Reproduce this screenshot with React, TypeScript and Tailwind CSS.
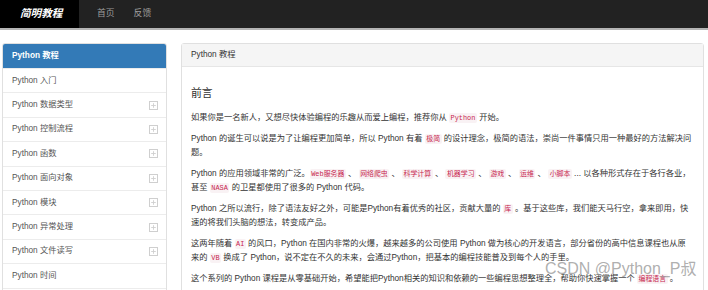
import React from "react";

const F = { fontFamily: '"Liberation Sans", "Noto Sans CJK SC", sans-serif' };

function C({ children }: { children: React.ReactNode }) {
  return (
    <code
      className="rounded-[2px] bg-[#f9f2f4] px-[1.5px] py-[1px] text-[6.9px] text-[#c7254e]"
      style={{ fontFamily: '"Liberation Mono", "Noto Sans CJK SC", monospace' }}
    >
      {children}
    </code>
  );
}

function Plus() {
  return (
    <svg width="9" height="9" viewBox="0 0 9 9" className="shrink-0">
      <rect x="0.5" y="0.5" width="8" height="8" fill="none" stroke="#cfcfcf" />
      <path d="M4.5 2.2v4.6M2.2 4.5h4.6" stroke="#cfcfcf" strokeWidth="0.9" />
    </svg>
  );
}

const items: [string, boolean][] = [
  ["Python 入门", false],
  ["Python 数据类型", true],
  ["Python 控制流程", true],
  ["Python 函数", true],
  ["Python 面向对象", true],
  ["Python 模块", true],
  ["Python 异常处理", true],
  ["Python 文件读写", true],
  ["Python 时间", false],
  ["Python 正则", true],
];

export default function App() {
  return (
    <div className="relative min-h-[290px] w-[708px] bg-white text-[#333]" style={F}>
      {/* navbar */}
      <div className="flex h-[30px] border-b-[2px] border-[#b5b5b5] bg-[#222]">
        <div className="flex h-full w-[79px] items-center bg-black pl-[20px]">
          <span className="text-[10.6px] font-bold italic text-white">简明教程</span>
        </div>
        <div className="flex items-center gap-[19px] pl-[18px] text-[8.8px] text-[#9d9d9d]">
          <span>首页</span>
          <span>反馈</span>
        </div>
      </div>

      <div className="flex gap-[14px] pl-[2px] pt-[13px]">
        {/* sidebar */}
        <div className="w-[165px] shrink-0 self-start overflow-hidden rounded-[3px] border border-[#e0e0e0] text-[8.25px] leading-[12px]">
          <div className="flex h-[24px] items-center bg-[#337ab7] pl-[9px] font-bold text-white">
            Python 教程
          </div>
          {items.map(([t, p]) => (
            <div
              key={t}
              className="flex h-[24.4px] items-center justify-between border-t border-[#ececec] pl-[9px] pr-[8px] text-[#555]"
            >
              <span>{t}</span>
              {p && <Plus />}
            </div>
          ))}
        </div>

        {/* main */}
        <div className="w-[523px] shrink-0 self-start rounded-[3px] border border-[#e0e0e0]">
          <div className="flex h-[23px] items-center border-b border-[#e6e6e6] bg-[#f5f5f5] pl-[9px] text-[8.25px] text-[#333]">
            Python 教程
          </div>
          <div className="px-[9px] pb-[9px] pt-[9px] text-[8.25px] leading-[14.5px]">
            <h4 className="mb-[12px] mt-[11px] text-[10.8px] leading-[12px] font-normal">前言</h4>
            <p className="mb-[6px]">
              如果你是一名新人，又想尽快体验编程的乐趣从而爱上编程，推荐你从 <C>Python</C> 开始。
            </p>
            <p className="mb-[6px]">
              Python 的诞生可以说是为了让编程更加简单，所以 Python 有着 <C>极简</C> 的设计理念，极简的语法，崇尚一件事情只用一种最好的方法解决问题。
            </p>
            <p className="mb-[6px]">
              Python 的应用领域非常的广泛。<C>Web服务器</C> 、 <C>网络爬虫</C> 、 <C>科学计算</C> 、 <C>机器学习</C> 、 <C>游戏</C> 、 <C>运维</C> 、 <C>小脚本</C> ... 以各种形式存在于各行各业，甚至 <C>NASA</C> 的卫星都使用了很多的 Python 代码。
            </p>
            <p className="mb-[6px]">
              Python 之所以流行，除了语法友好之外，可能是Python有着优秀的社区，贡献大量的 <C>库</C> 。基于这些库，我们能天马行空，拿来即用，快速的将我们头脑的想法，转变成产品。
            </p>
            <p className="mb-[6px]">
              这两年随着 <C>AI</C> 的风口，Python 在国内非常的火爆，越来越多的公司使用 Python 做为核心的开发语言，部分省份的高中信息课程也从原来的 <C>VB</C> 换成了 Python，说不定在不久的未来，会通过Python，把基本的编程技能普及到每个人的手里。
            </p>
            <p className="mb-[6px]">
              这个系列的 Python 课程是从零基础开始，希望能把Python相关的知识和依赖的一些编程思想整理全，帮助你快速掌握一个 <C>编程语言</C> 。
            </p>
          </div>
        </div>
      </div>

      {/* watermark */}
      <div className="pointer-events-none absolute left-[545px] top-[259px] text-[16px] leading-[20px] text-[#9a9a9a]/80">
        CSDN @Python_P叔
      </div>
    </div>
  );
}
